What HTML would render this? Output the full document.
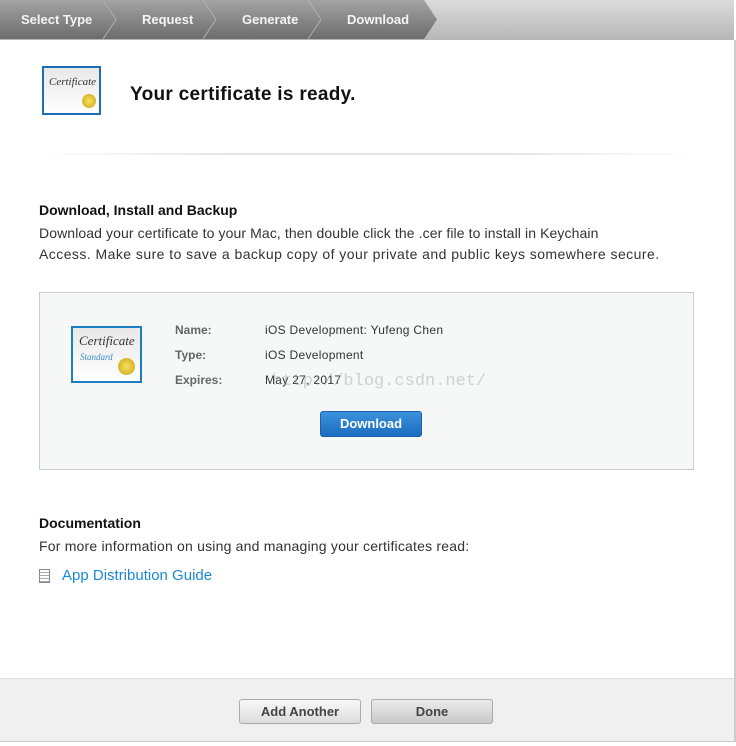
<!DOCTYPE html>
<html><head><style>
*{margin:0;padding:0;box-sizing:border-box}
body{width:736px;height:746px;background:#fff;font-family:"Liberation Sans",sans-serif;position:relative;overflow:hidden;color:#333}
.bar{position:absolute;left:0;top:0;width:734px;height:40px;background:linear-gradient(#dcdcdc,#b6b6b6)}
.steps{position:absolute;left:0;top:0;height:39px;width:437px}
.step{position:absolute;top:0;height:39px;color:#f4f4f4;font-weight:bold;font-size:13px;line-height:39px}
.cert{position:absolute;border:2px solid #1a6fb5;background:linear-gradient(#e8e8e8,#fff)}
.t{position:absolute;white-space:nowrap}
.btn{position:absolute;height:25px;border:1px solid #aaa;border-radius:3px;background:linear-gradient(#f8f8f8,#dcdcdc);font-weight:bold;font-size:13px;color:#444;text-align:center;line-height:23px}
</style></head><body>
<div class="bar"></div>
<svg class="steps" width="437" height="39" style="position:absolute;left:0;top:0">
<defs><linearGradient id="g" x1="0" y1="0" x2="0" y2="1"><stop offset="0" stop-color="#a3a3a3"/><stop offset="1" stop-color="#6c6c6c"/></linearGradient></defs>
<polygon points="0,0 424,0 437,19.5 424,39 0,39" fill="url(#g)"/>
<polyline points="103,0 116,19.5 103,39" fill="none" stroke="#b0b0b0"/>
<polyline points="203,0 216,19.5 203,39" fill="none" stroke="#b0b0b0"/>
<polyline points="308,0 321,19.5 308,39" fill="none" stroke="#b0b0b0"/>
</svg>
<div class="step" style="left:21px">Select Type</div>
<div class="step" style="left:142px">Request</div>
<div class="step" style="left:242px">Generate</div>
<div class="step" style="left:347px">Download</div>
<div style="position:absolute;left:734px;top:40px;width:2px;height:702px;background:#ccc"></div>

<div class="cert" style="left:42px;top:66px;width:59px;height:49px"><span style="font-family:'Liberation Serif';font-style:italic;font-size:11px;position:absolute;left:5px;top:8px;color:#333">Certificate</span><span style="position:absolute;left:38px;top:26px;width:14px;height:14px;border-radius:50%;background:radial-gradient(#f6e25a,#c9a21a)"></span></div>
<div class="t" style="left:130px;top:84px;font-size:19px;font-weight:bold;color:#111;letter-spacing:0.3px">Your certificate is ready.</div>
<div style="position:absolute;left:38px;top:153px;width:660px;height:2px;background:linear-gradient(90deg,#fff,#e4e4e4 30%,#e4e4e4 70%,#fff)"></div>

<div class="t" style="left:39px;top:202px;font-size:14px;font-weight:bold;color:#111">Download, Install and Backup</div>
<div class="t" style="left:39px;top:223px;font-size:14px;line-height:21px;color:#333;letter-spacing:0.1px">Download your certificate to your Mac, then double click the .cer file to install in Keychain<br><span style="letter-spacing:0.45px">Access. Make sure to save a backup copy of your private and public keys somewhere secure.</span></div>

<div style="position:absolute;left:39px;top:292px;width:655px;height:178px;background:#f6f7f7;border:1px solid #ccc"></div>
<div class="cert" style="left:71px;top:326px;width:71px;height:57px;border-color:#1a7fc2"><span style="font-family:'Liberation Serif';font-style:italic;font-size:13px;position:absolute;left:6px;top:5px;color:#333">Certificate</span><span style="font-family:'Liberation Serif';font-style:italic;font-size:9px;position:absolute;left:7px;top:24px;color:#3a8ed0">Standard</span><span style="position:absolute;left:45px;top:30px;width:17px;height:17px;border-radius:50%;background:radial-gradient(#f6e25a,#c9a21a)"></span></div>
<div class="t" style="left:175px;top:318px;font-size:12px;font-weight:bold;color:#666;line-height:25px">Name:<br>Type:<br>Expires:</div>
<div class="t" style="left:265px;top:318px;font-size:12px;color:#333;line-height:25px;letter-spacing:0.3px">iOS Development: Yufeng Chen<br>iOS Development<br>May 27, 2017</div>
<div class="t" style="left:272px;top:372px;font-family:'Liberation Mono';font-size:17px;color:rgba(150,150,150,.4)">http://blog.csdn.net/</div>
<div style="position:absolute;left:320px;top:411px;width:102px;height:26px;border-radius:3px;background:linear-gradient(#3b92dd,#1c6cbf);border:1px solid #1a62ad;color:#fff;font-weight:bold;font-size:13px;text-align:center;line-height:24px">Download</div>

<div class="t" style="left:39px;top:515px;font-size:14px;font-weight:bold;color:#111">Documentation</div>
<div class="t" style="left:39px;top:538px;font-size:14px;color:#333;letter-spacing:0.2px">For more information on using and managing your certificates read:</div>
<div style="position:absolute;left:39px;top:569px;width:11px;height:14px;border:1px solid #888;background:repeating-linear-gradient(#fff 0 2px,#aaa 2px 3px)"></div>
<div class="t" style="left:62px;top:567px;font-size:15px;color:#1a8ad4">App Distribution Guide</div>

<div style="position:absolute;left:0;top:678px;width:734px;height:64px;background:#f0f0f0;border-top:1px solid #ddd;border-bottom:1px solid #ccc"></div>
<div class="btn" style="left:239px;top:699px;width:122px">Add Another</div>
<div class="btn" style="left:371px;top:699px;width:122px;background:linear-gradient(#ebebeb,#c9c9c9)">Done</div>
</body></html>
